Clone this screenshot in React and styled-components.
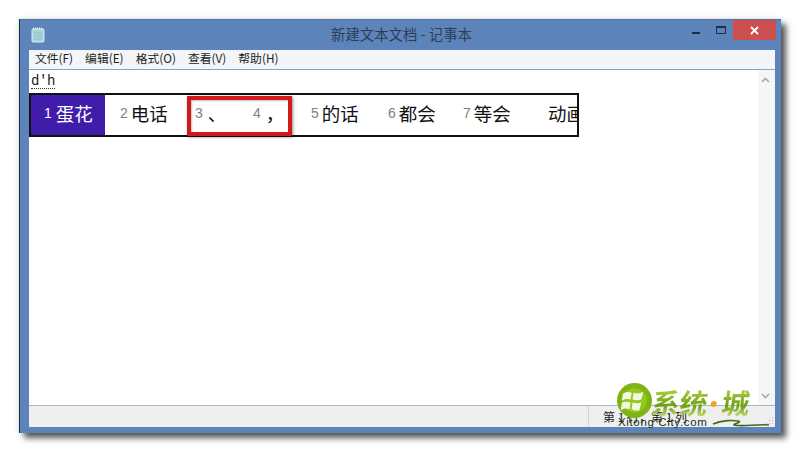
import React from "react";
import styled, { createGlobalStyle } from "styled-components";

const Global = createGlobalStyle`
  html, body { margin: 0; padding: 0; background: #fff; }
  body { width: 800px; height: 454px; overflow: hidden; font-family: "Liberation Sans", "Noto Sans CJK SC", sans-serif; }
`;
const CJK = `"Noto Sans CJK SC", "Liberation Sans", sans-serif`;

const Page = styled.div`
  width: 800px; height: 454px; padding: 19px 19px 21px 19px; box-sizing: border-box; position: relative; overflow: hidden;
`;
const Window = styled.div`
  width: 762px; height: 414px; box-sizing: border-box; background: #5d84ba;
  border-left: 1px solid #15303c; border-top: 1px solid #4f719f;
  box-shadow: 5px 5px 6px rgba(45,45,45,.8), -1px -1px 4px rgba(120,120,120,.2);
  display: flex; flex-direction: column; padding: 0 6px 6px 9px; position: relative;
`;
const TitleBar = styled.div`
  height: 30px; flex: none; display: flex; align-items: center; position: relative;
`;
const NoteIcon = styled.svg`width: 14px; height: 16px; margin-left: 2px; margin-top: -1px;`;
const Title = styled.div`
  position: absolute; left: 0; right: 0; top: 5px; text-align: center; font: 14.4px/18px ${CJK}; color: #2c3d55; padding-right: 1px;
`;
const Controls = styled.div`
  position: absolute; top: 0; right: -1px; display: flex; align-items: flex-start;
`;
const Ctl = styled.div`
  width: ${p => p.$w}px; height: 20px; display: flex; align-items: center; justify-content: center; background: ${p => p.$bg || "transparent"};
`;
const MinGlyph = styled.svg`margin-top: 6px;`;
const MenuBar = styled.div`
  height: 19px; flex: none; background: #f3f5f8; border-bottom: 1px solid #7fa6d2; display: flex; align-items: flex-start; padding-left: 6px; gap: 12px;
  font: 11.8px/16px ${CJK}; color: #1c1c1c;
`;
const Menu = styled.span`white-space: nowrap;`;
const Body = styled.div`flex: 1; display: flex; min-height: 0; background: #fff; position: relative;`;
const Editor = styled.div`flex: 1; position: relative; padding-top: 4px;`;
const Typed = styled.div`
  font: 14px/14px "Liberation Mono", monospace; color: #222; margin-left: 2px; width: 24px;
  border-bottom: 1px dotted #333; height: 14px; letter-spacing: -.4px;
`;
const ImeBar = styled.div`
  position: absolute; left: 0; top: 23px; width: 550px; height: 44px; box-sizing: border-box; border: 2px solid #111; background: #fff; display: flex; overflow: hidden;
`;
const Cand = styled.div`
  width: ${p => p.$w}px; flex: none; display: flex; align-items: center; justify-content: flex-start; gap: ${p => p.$gap || 3}px; white-space: nowrap;
  background: ${p => p.$on ? "#3f1caa" : "#fff"}; color: ${p => p.$on ? "#fff" : "#111"}; font: 18.5px/24px ${CJK};
  padding: 0 0 4px ${p => p.$pl}px; box-sizing: border-box;
`;
const Num = styled.span`font: 14px/24px "Liberation Sans", sans-serif; color: ${p => p.$on ? "#fff" : "#808080"};`;
const RedBox = styled.div`
  position: absolute; left: 158px; top: 26px; width: 105px; height: 40px; box-sizing: border-box; border: 4px solid #d3181c;
  box-shadow: 1px 1px 3px rgba(0,0,0,.45), inset 1px 1px 2px rgba(0,0,0,.25);
`;
const Scroll = styled.div`
  width: 17px; flex: none; background: #f6f6f6; display: flex; flex-direction: column; justify-content: space-between; align-items: center; padding: 7px 2px 6px 0; box-sizing: border-box;
`;
const Status = styled.div`
  height: 22px; flex: none; background: #efefef; border-top: 1px solid #a3b7cc; box-sizing: border-box; position: relative; display: flex;
`;
const StatusCell = styled.div`
  margin-left: 559px; border-left: 1px solid #d4d4d4; padding-left: 14px; font: 12px/22px ${CJK}; color: #222; white-space: nowrap;
`;
const Logo = styled.div`
  position: absolute; left: 615px; top: 383px; width: 165px; height: 46px;
`;
const LogoMark = styled.svg`position: absolute; left: 2px; top: 0; width: 35px; height: 35px;`;
const LogoText = styled.div`
  position: absolute; left: 37px; top: 0; font: bold 28px/38px ${CJK}; white-space: nowrap; display: flex; align-items: center; transform: skewX(-8deg);
  background: linear-gradient(180deg, #b8d84a 10%, #6e9e12 60%, #dbe98a 95%); -webkit-background-clip: text; background-clip: text; color: transparent;
`;
const LogoDot = styled.span`width: 14px; height: 38px; position: relative; flex: none;`;
const Dot = styled.i`position: absolute; left: 3px; top: 18px; width: 6px; height: 6px; border-radius: 50%; background: #f0a52a;`;
const LogoUrl = styled.div`
  position: absolute; left: 3px; top: 32px; font: 11.5px/14px "Liberation Sans", sans-serif; color: #20301a; letter-spacing: .65px; white-space: nowrap;
`;
const Swoosh = styled.svg`position: absolute; left: 96px; top: 30px; width: 60px; height: 15px;`;
const Grip = styled.svg`position: absolute; right: 0; bottom: 1px; width: 12px; height: 12px;`;

export default function App() {
  return (
    <>
      <Global />
      <Page>
        <Window>
          <TitleBar>
            <NoteIcon viewBox="0 0 14 16">
              <rect x="1" y="2" width="12" height="13" rx="1" fill="#a9d3d8" stroke="#d7ecee" />
              <path d="M2 1.5h10" stroke="#e8f4f4" strokeWidth="2" strokeDasharray="1 1" />
              <path d="M3 6h8M3 9h8M3 12h8" stroke="#8fc0c8" />
            </NoteIcon>
            <Title>新建文本文档 - 记事本</Title>
            <Controls>
              <Ctl $w={25}>
                <MinGlyph width="8" height="2" viewBox="0 0 8 2"><rect width="8" height="2" fill="#1d2f49" /></MinGlyph>
              </Ctl>
              <Ctl $w={25}>
                <svg width="10" height="8" viewBox="0 0 10 8"><rect x=".5" y=".5" width="9" height="7" fill="none" stroke="#1d2f49" /><path d="M0 1h10" stroke="#1d2f49" strokeWidth="2" /></svg>
              </Ctl>
              <Ctl $w={43} $bg="#cd4f4f">
                <svg width="9" height="9" viewBox="0 0 9 9"><path d="M1 1l7 7M8 1L1 8" stroke="#fff" strokeWidth="1.8" /></svg>
              </Ctl>
            </Controls>
          </TitleBar>
          <MenuBar>
            <Menu>文件(F)</Menu><Menu>编辑(E)</Menu><Menu>格式(O)</Menu><Menu>查看(V)</Menu><Menu>帮助(H)</Menu>
          </MenuBar>
          <Body>
            <Editor>
              <Typed>d'h</Typed>
              <ImeBar>
                <Cand $w={74} $on $pl={13} $gap={4}><Num $on>1</Num>蛋花</Cand>
                <Cand $w={76} $pl={15}><Num>2</Num>电话</Cand>
                <Cand $w={58} $pl={14} $gap={5}><Num>3</Num>、</Cand>
                <Cand $w={58} $pl={14} $gap={5}><Num>4</Num>，</Cand>
                <Cand $w={76} $pl={14}><Num>5</Num>的话</Cand>
                <Cand $w={76} $pl={15}><Num>6</Num>都会</Cand>
                <Cand $w={76} $pl={14}><Num>7</Num>等会</Cand>
                <Cand $w={60} $pl={23}>动画</Cand>
              </ImeBar>
              <RedBox />
            </Editor>
            <Scroll>
              <svg width="9" height="6" viewBox="0 0 9 6"><path d="M1 5l3.5-3.5L8 5" fill="none" stroke="#a8a8a8" strokeWidth="1.6" /></svg>
              <svg width="9" height="6" viewBox="0 0 9 6"><path d="M1 1l3.5 3.5L8 1" fill="none" stroke="#a8a8a8" strokeWidth="1.6" /></svg>
            </Scroll>
          </Body>
          <Status>
            <StatusCell>第 1 行，第 1 列</StatusCell>
            <Grip viewBox="0 0 12 12"><path d="M9 3h1v1H9zM6 6h1v1H6zM9 6h1v1H9zM3 9h1v1H3zM6 9h1v1H6zM9 9h1v1H9z" fill="#b5b5b5" /></Grip>
          </Status>
        </Window>
        <Logo>
          <LogoMark viewBox="0 0 36 36">
            <circle cx="18" cy="18" r="18" fill="#7fb512" />
            <circle cx="18" cy="18" r="12.5" fill="#96c71f" />
            <path d="M6 11c3-2 6-2 9-1l-1 7c-3-1-6-1-9 1zM17 10c3 1 7 1 10-1l-2 8c-3 1-6 1-9 0zM5 20c3-1 6-1 9 0l-1 7c-3-1-6-1-9 1zM16 20c3 1 6 1 9 0l-2 8c-3 1-6 0-8-1z" fill="#f3f8e2" />
          </LogoMark>
          <LogoText>系统<LogoDot><Dot /></LogoDot>城</LogoText>
          <LogoUrl>Xitong City.com</LogoUrl>
          <Swoosh viewBox="0 0 60 15">
            <path d="M2 11c9-4 20-4 25-3 5 1-5 3-4 4 9 2 22-1 35 0" fill="none" stroke="#3f6a10" strokeWidth="1.6" />
          </Swoosh>
        </Logo>
      </Page>
    </>
  );
}
